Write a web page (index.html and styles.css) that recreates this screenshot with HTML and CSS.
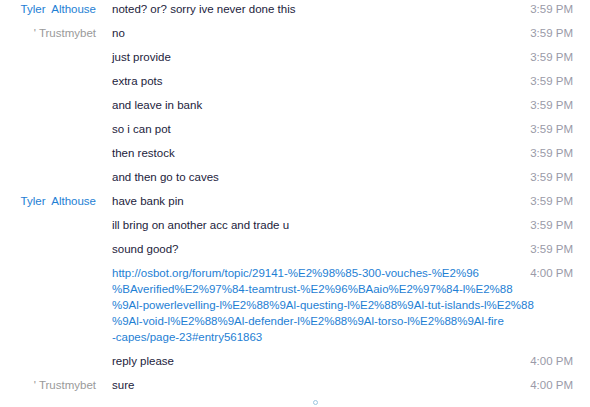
FILE: index.html
```html
<!DOCTYPE html>
<html>
<head>
<meta charset="utf-8">
<link rel="stylesheet" href="styles.css">
</head>
<body>
<div class="chat">
  <div class="row"><div class="name me">Tyler&nbsp; Althouse</div><div class="msg">noted? or? sorry ive never done this</div><div class="time">3:59 PM</div></div>
  <div class="row"><div class="name them">' Trustmybet</div><div class="msg">no</div><div class="time">3:59 PM</div></div>
  <div class="row"><div class="name"></div><div class="msg">just provide</div><div class="time">3:59 PM</div></div>
  <div class="row"><div class="name"></div><div class="msg">extra pots</div><div class="time">3:59 PM</div></div>
  <div class="row"><div class="name"></div><div class="msg">and leave in bank</div><div class="time">3:59 PM</div></div>
  <div class="row"><div class="name"></div><div class="msg">so i can pot</div><div class="time">3:59 PM</div></div>
  <div class="row"><div class="name"></div><div class="msg">then restock</div><div class="time">3:59 PM</div></div>
  <div class="row"><div class="name"></div><div class="msg">and then go to caves</div><div class="time">3:59 PM</div></div>
  <div class="row"><div class="name me">Tyler&nbsp; Althouse</div><div class="msg">have bank pin</div><div class="time">3:59 PM</div></div>
  <div class="row"><div class="name"></div><div class="msg">ill bring on another acc and trade u</div><div class="time">3:59 PM</div></div>
  <div class="row"><div class="name"></div><div class="msg">sound good?</div><div class="time">3:59 PM</div></div>
  <div class="row"><div class="name"></div><div class="msg link">http://osbot.org/forum/topic/29141-%E2%98%85-300-vouches-%E2%96<br>%BAverified%E2%97%84-teamtrust-%E2%96%BAaio%E2%97%84-l%E2%88<br>%9Al-powerlevelling-l%E2%88%9Al-questing-l%E2%88%9Al-tut-islands-l%E2%88<br>%9Al-void-l%E2%88%9Al-defender-l%E2%88%9Al-torso-l%E2%88%9Al-fire<br>-capes/page-23#entry561863</div><div class="time">4:00 PM</div></div>
  <div class="row"><div class="name"></div><div class="msg">reply please</div><div class="time">4:00 PM</div></div>
  <div class="row"><div class="name them">' Trustmybet</div><div class="msg">sure</div><div class="time">4:00 PM</div></div>
</div>
<div class="dot"></div>
</body>
</html>
```
FILE: styles.css
```css
html, body {
  margin: 0;
  padding: 0;
  background: #ffffff;
  width: 590px;
  height: 407px;
  overflow: hidden;
}
body {
  font-family: "Liberation Sans", Arial, sans-serif;
  font-size: 11.5px;
  position: relative;
}
.chat {
  margin-top: -3px;
  display: flex;
  flex-direction: column;
}
.row {
  display: flex;
  align-items: flex-start;
  padding: 4px 0;
  line-height: 16px;
}
.name {
  width: 96px;
  flex: none;
  text-align: right;
  white-space: nowrap;
}
.me { color: #1e80d4; }
.them { color: #9a9a9a; }
.msg {
  flex: 1 1 0;
  min-width: 0;
  margin-left: 16px;
  color: #1c1c3c;
  white-space: nowrap;
}
.link { color: #1e80d4; }
.time {
  width: 60px;
  flex: none;
  text-align: right;
  color: #9a9aa8;
  margin-right: 17px;
}
.dot {
  position: absolute;
  left: 313px;
  top: 400px;
  width: 3px;
  height: 3px;
  border: 1px solid #9cc6e0;
  border-radius: 50%;
}
```
